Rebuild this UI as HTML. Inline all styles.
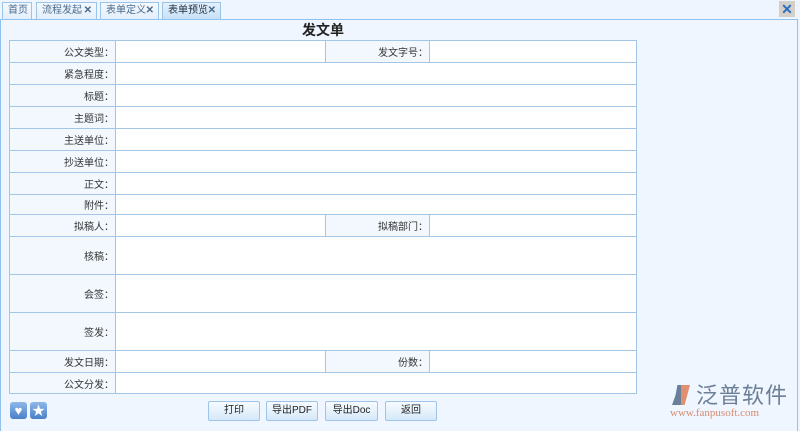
<!DOCTYPE html><html><head><meta charset="utf-8"><style>
*{margin:0;padding:0;box-sizing:border-box}
body{width:800px;height:431px;background:#eef5fe;font-family:"Liberation Sans","Noto Sans CJK SC",sans-serif;font-size:10px;color:#222;position:relative;overflow:hidden}
.tabs{position:absolute;top:0;left:0;height:19px;width:800px;background:#eef5fe}
.tab{position:absolute;top:2px;height:17px;border:1px solid #9cc3e8;border-bottom:none;background:linear-gradient(#f4f9ff,#e4effb);color:#4a6a8a;font-size:10px;line-height:15px;padding-left:5px}
.tab.on{background:linear-gradient(#e4f1fd,#c8e1f7);color:#234}
.tab b{color:#4a6a8a;font-size:10px;position:absolute;right:4px;top:0}
.panel{position:absolute;top:19px;left:0;width:798px;height:412px;border:1px solid #8fc2ee;border-bottom:none;background:#eff6ff}
.title{position:absolute;top:20px;left:0;width:646px;text-align:center;font-size:14px;font-weight:bold;color:#222}
table{position:absolute;left:9px;top:40px;border-collapse:collapse;width:628px;table-layout:fixed}
td{border:1px solid #a3c6e6;height:22px;background:#fff;padding:0;font-size:10px}
tr{height:22px}
td.l{background:#f2f8fe;text-align:right;padding-right:1px;color:#333}
.btn{position:absolute;top:401px;height:20px;border:1px solid #9ec4e8;border-radius:2px;background:linear-gradient(#f6fbff,#d6e8f9);text-align:center;line-height:18px;font-size:10px;color:#222}
.ic{position:absolute;top:402px;width:17px;height:17px;border-radius:3px;background:linear-gradient(#8fb8ea,#4a7fc8);color:#fff;text-align:center;line-height:17px;font-size:13px}
</style></head><body>
<div class="tabs">
<div class="tab" style="left:2px;width:30px">首页</div>
<div class="tab" style="left:36px;width:61px">流程发起<b>✕</b></div>
<div class="tab" style="left:100px;width:59px">表单定义<b>✕</b></div>
<div class="tab on" style="left:162px;width:59px">表单预览<b>✕</b></div>
<div style="position:absolute;left:779px;top:1px;width:16px;height:16px;background:#d4d0c8;color:#2a6fc0;font-size:14px;line-height:16px;text-align:center;font-weight:bold">✕</div>
</div>
<div class="panel"></div>
<div class="title">发文单</div>
<table>
<colgroup><col style="width:106px"><col style="width:210px"><col style="width:104px"><col></colgroup>
<tr><td class="l">公文类型：</td><td></td><td class="l">发文字号：</td><td></td></tr>
<tr><td class="l">紧急程度：</td><td colspan="3"></td></tr>
<tr><td class="l">标题：</td><td colspan="3"></td></tr>
<tr><td class="l">主题词：</td><td colspan="3"></td></tr>
<tr><td class="l">主送单位：</td><td colspan="3"></td></tr>
<tr><td class="l">抄送单位：</td><td colspan="3"></td></tr>
<tr><td class="l">正文：</td><td colspan="3"></td></tr>
<tr style="height:20px"><td class="l" style="height:20px">附件：</td><td colspan="3" style="height:20px"></td></tr>
<tr><td class="l">拟稿人：</td><td></td><td class="l">拟稿部门：</td><td></td></tr>
<tr style="height:38px"><td class="l" style="height:38px">核稿：</td><td colspan="3" style="height:38px"></td></tr>
<tr style="height:38px"><td class="l" style="height:38px">会签：</td><td colspan="3" style="height:38px"></td></tr>
<tr style="height:38px"><td class="l" style="height:38px">签发：</td><td colspan="3" style="height:38px"></td></tr>
<tr><td class="l">发文日期：</td><td></td><td class="l">份数：</td><td></td></tr>
<tr style="height:21px"><td class="l" style="height:21px">公文分发：</td><td colspan="3" style="height:21px"></td></tr>
</table>
<div class="ic" style="left:10px">♥</div>
<div class="ic" style="left:30px">★</div>
<div class="btn" style="left:208px;width:52px">打印</div>
<div class="btn" style="left:266px;width:52px">导出PDF</div>
<div class="btn" style="left:325px;width:53px">导出Doc</div>
<div class="btn" style="left:385px;width:52px">返回</div>
<div style="position:absolute;left:672px;top:385px;width:18px;height:20px;background:linear-gradient(90deg,#6a7f9a 50%,#e09070 50%);clip-path:polygon(30% 0,100% 0,70% 100%,0 100%,20% 50%)"></div>
<div style="position:absolute;left:696px;top:380px;font-size:22px;color:#6d7f96;letter-spacing:1px;font-family:'Noto Sans CJK SC',sans-serif;line-height:28px">泛普软件</div>
<div style="position:absolute;left:670px;top:407px;font-size:11px;color:#d88a70;font-family:'Liberation Serif',serif">www.fanpusoft.com</div>
</body></html>
